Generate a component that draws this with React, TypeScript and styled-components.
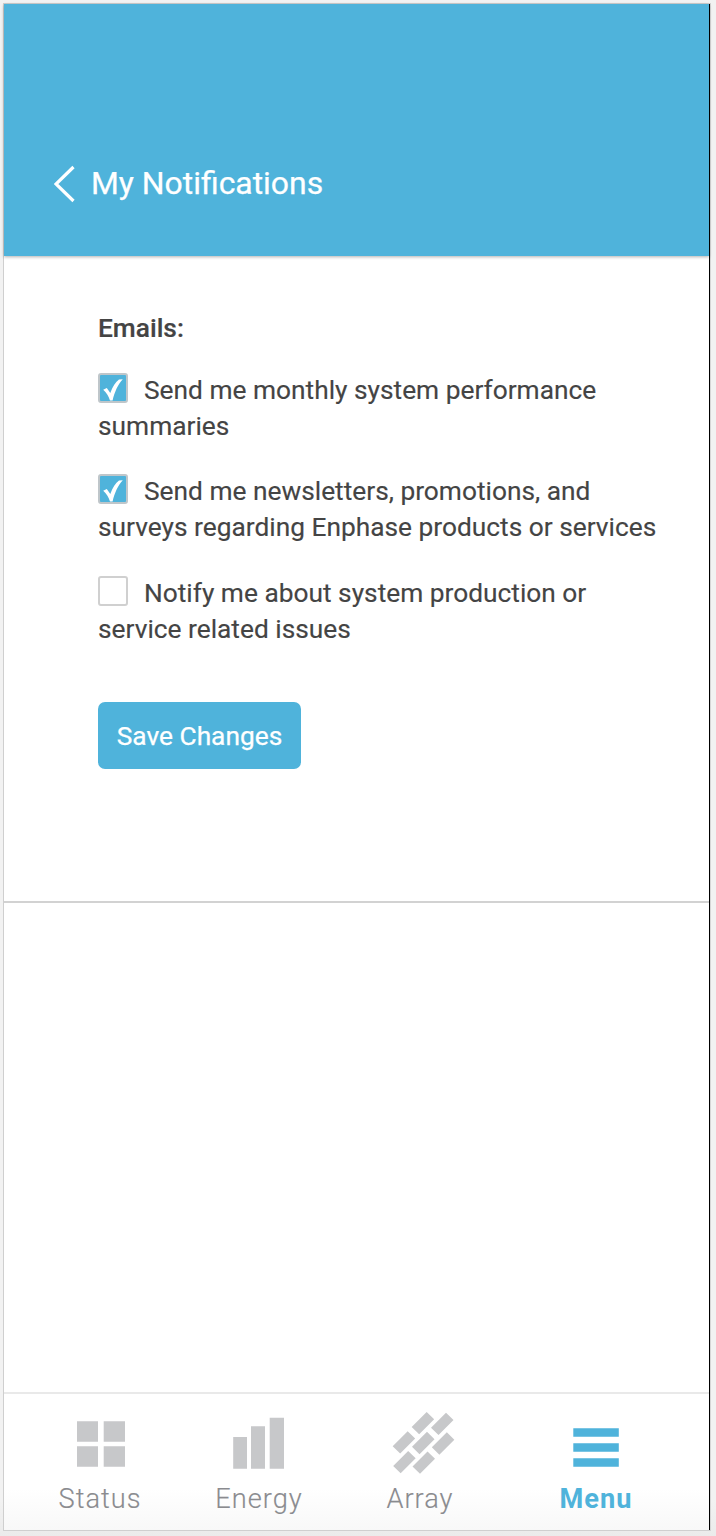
import React, { useState } from "react";
import styled, { createGlobalStyle } from "styled-components";

const BLUE = "#4fb3db";
const ICON_GREY = "#c7c8ca";

const GlobalStyle = createGlobalStyle`
  * { box-sizing: border-box; }
  body {
    margin: 0;
    background: #f2f2f2;
    font-family: Roboto, "Liberation Sans", sans-serif;
    color: #444;
  }
`;

const Page = styled.div`
  height: 1536px;
  padding: 3px 5px 5px 3px;
  overflow: hidden;
  background: linear-gradient(#f2f2f2 1500px, #ebebeb);
`;

const Frame = styled.div`
  height: 1528px;
  border: 1px solid #cfcfcf;
  border-right-color: #d6d6d6;
  width: 708px;
`;

const Screen = styled.div`
  height: 100%;
  display: flex;
  flex-direction: column;
  border-right: 1px solid #000;
  background: #fff;
`;

const Header = styled.header`
  flex: none;
  height: 252px;
  padding: 154px 0 0 50px;
  display: flex;
  align-items: flex-start;
  background: ${BLUE};
  box-shadow: 0 1px 3px rgba(0, 0, 0, 0.3);
`;

const BackIcon = styled.svg`
  width: 22px;
  height: 44px;
  margin-top: 4px;
`;

const Title = styled.h1`
  margin: 0 0 0 15px;
  font-size: 31.9px;
  line-height: 50px;
  font-weight: 400;
  color: #fff;
  -webkit-text-stroke: 0.25px #fff;
`;

const Content = styled.main`
  flex: none;
  height: 647px;
  padding: 54px 40px 0 94px;
  border-bottom: 2px solid #d2d2d2;
`;

const SectionTitle = styled.h2`
  margin: 0 0 26px;
  font-size: 26.3px;
  line-height: 36px;
  font-weight: 500;
  -webkit-text-stroke: 0.2px #444;
`;

const Option = styled.label`
  display: block;
  margin-bottom: 29.4px;
  font-size: 26.3px;
  line-height: 36px;
  -webkit-text-stroke: 0.15px #444;
`;

const Box = styled.span<{ $checked: boolean }>`
  display: inline-block;
  width: 30px;
  height: 30px;
  margin: 1px 16px 0 0;
  vertical-align: top;
  border: 2px solid ${(p) => (p.$checked ? "#bfc6ca" : "#d0d0d0")};
  border-radius: 3px;
  background: ${(p) => (p.$checked ? BLUE : "#fff")};
`;

const Tick = styled.svg`
  display: block;
  width: 26px;
  height: 26px;
`;

const HiddenInput = styled.input`
  display: none;
`;

const SaveButton = styled.button`
  display: block;
  width: 203px;
  height: 67.5px;
  margin-top: 55px;
  padding: 1px 0 0;
  border: 0;
  border-radius: 7px;
  background: ${BLUE};
  color: #fff;
  font: 400 26.3px Roboto, sans-serif;
  -webkit-text-stroke: 0.25px #fff;
`;

const Spacer = styled.div`
  flex: 1;
`;

const TabBar = styled.nav`
  flex: none;
  height: 138px;
  padding: 18px 0 0 16px;
  display: grid;
  grid-template-columns: 160px 158px 164px 188px;
  border-top: 2px solid #e9e9e9;
  background: linear-gradient(#fff 95px, #f8f8f8);
`;

const Tab = styled.a<{ $active?: boolean }>`
  display: flex;
  flex-direction: column;
  align-items: center;
  font-size: 27.2px;
  line-height: 36px;
  letter-spacing: 1px;
  font-weight: ${(p) => (p.$active ? 700 : 300)};
  color: ${(p) => (p.$active ? BLUE : "#8a8b8f")};
  -webkit-text-stroke: ${(p) => (p.$active ? "0" : "0.15px #8a8b8f")};
`;

const TabIcon = styled.svg`
  width: 72px;
  height: 64px;
  margin-bottom: 5px;
`;

const options = [
  { text: "Send me monthly system performance summaries", on: true },
  { text: "Send me newsletters, promotions, and surveys regarding Enphase products or services", on: true },
  { text: "Notify me about system production or service related issues", on: false },
];

function CheckOption({ text, on }: { text: string; on: boolean }) {
  const [checked, setChecked] = useState(on);
  return (
    <Option>
      <HiddenInput type="checkbox" checked={checked} onChange={() => setChecked(!checked)} />
      <Box $checked={checked}>
        {checked && (
          <Tick viewBox="0 0 26 26">
            <path d="M3.2 14.7 L6.8 13.1 L10.3 18.1 C12.6 11.5 15.6 6.9 19 4.5 L22.8 4.3 C18 9.5 14.5 17 12.6 25.5 L10 25.5 C8.5 21 6.5 17.5 3.2 14.7 Z" fill="#fff" />
          </Tick>
        )}
      </Box>
      {text}
    </Option>
  );
}

export default function App() {
  return (
    <Page>
      <GlobalStyle />
      <Frame>
        <Screen>
          <Header>
            <BackIcon viewBox="0 0 22 44">
              <path d="M19.5 5 L2 22 L19.5 39" fill="none" stroke="#fff" strokeWidth="3.2" />
            </BackIcon>
            <Title>My Notifications</Title>
          </Header>
          <Content>
            <SectionTitle>Emails:</SectionTitle>
            {options.map((o) => (
              <CheckOption key={o.text} {...o} />
            ))}
            <SaveButton>Save Changes</SaveButton>
          </Content>
          <Spacer />
          <TabBar>
            <Tab>
              <TabIcon viewBox="0 0 72 64" fill={ICON_GREY}>
                <path d="M13 9.3h21v20.5h-21zM39.7 9.3h21.3v20.5h-21.3zM13 34.3h21v20.5h-21zM39.7 34.3h21.3v20.5h-21.3z" />
              </TabIcon>
              Status
            </Tab>
            <Tab>
              <TabIcon viewBox="0 0 72 64" fill={ICON_GREY}>
                <path d="M10.2 25h13.8v31.7h-13.8zM28 14.3h14v42.4h-14zM46.7 5.7h14.3v51h-14.3z" />
              </TabIcon>
              Energy
            </Tab>
            <Tab>
              <TabIcon viewBox="42 96 216 192" fill={ICON_GREY}>
                <path d="M170 96l22.500 22-45 45-22.500-22zM228 98l22.500 22-45 45-22.500-22zM113 153.500l22.500 22-45 45-22.500-22zM171 155.500l22.500 22-45 45-22.500-22zM230.500 157l22.500 22-45 45-22.500-22zM114.500 213l22.500 22-45 45-22.500-22zM172.500 214.500l22.500 22-45 45-22.500-22z" />
              </TabIcon>
              Array
            </Tab>
            <Tab $active>
              <TabIcon viewBox="0 0 72 64" fill={BLUE}>
                <path d="M13.3 16.2h45.5v8.5h-45.5zM13.3 31.2h45.5v8.5h-45.5zM13.3 46.2h45.5v8.5h-45.5z" />
              </TabIcon>
              Menu
            </Tab>
          </TabBar>
        </Screen>
      </Frame>
    </Page>
  );
}
